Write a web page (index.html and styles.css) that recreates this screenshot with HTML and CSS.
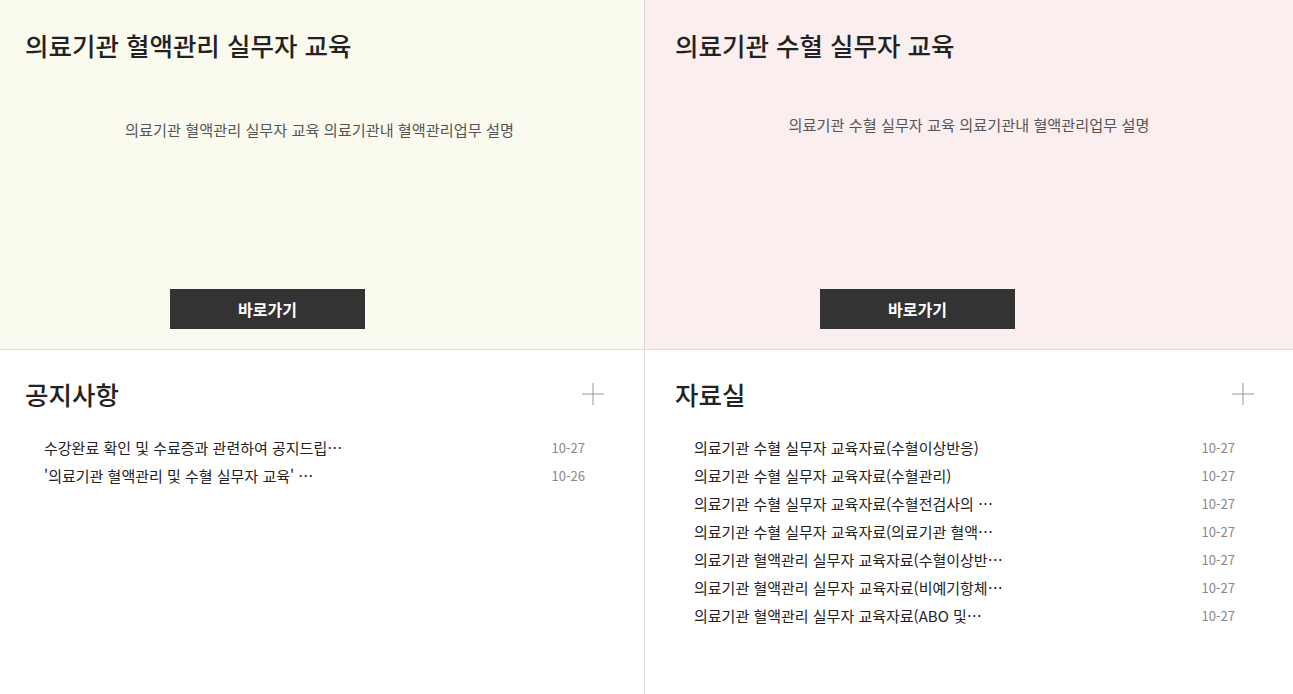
FILE: index.html
```html
<!DOCTYPE html>
<html lang="ko">
<head>
    <meta charset="UTF-8">
    <meta name="viewport" content="width=device-width, initial-scale=1.0">
    <title>혈액관리 실무자 교육</title>
    <link rel="stylesheet" href="styles.css">
</head>
<body>
    <div class="main">
        <!-- 교육 바로가기 -->
        <section class="edu edu-blood">
            <h2 class="edu-title">의료기관 혈액관리 실무자 교육</h2>
            <p class="edu-desc edu-desc-low">의료기관 혈액관리 실무자 교육 의료기관내 혈액관리업무 설명</p>
            <a href="#" class="button">바로가기</a>
        </section>
        <section class="edu edu-trans">
            <h2 class="edu-title">의료기관 수혈 실무자 교육</h2>
            <p class="edu-desc">의료기관 수혈 실무자 교육 의료기관내 혈액관리업무 설명</p>
            <a href="#" class="button">바로가기</a>
        </section>

        <!-- 공지사항 -->
        <section class="board board-left">
            <div class="board-head">
                <h3>공지사항</h3>
                <a href="#" class="more" aria-label="더보기">
                    <svg width="22" height="22" viewBox="0 0 22 22"><path d="M11 0V22M0 11H22" stroke="#999" stroke-width="1" fill="none"/></svg>
                </a>
            </div>
            <ul class="board-list">
                <li><a href="#">수강완료 확인 및 수료증과 관련하여 공지드립…</a><span class="date">10-27</span></li>
                <li><a href="#">'의료기관 혈액관리 및 수혈 실무자 교육' …</a><span class="date">10-26</span></li>
            </ul>
        </section>

        <!-- 자료실 -->
        <section class="board">
            <div class="board-head">
                <h3>자료실</h3>
                <a href="#" class="more" aria-label="더보기">
                    <svg width="22" height="22" viewBox="0 0 22 22"><path d="M11 0V22M0 11H22" stroke="#999" stroke-width="1" fill="none"/></svg>
                </a>
            </div>
            <ul class="board-list">
                <li><a href="#">의료기관 수혈 실무자 교육자료(수혈이상반응)</a><span class="date">10-27</span></li>
                <li><a href="#">의료기관 수혈 실무자 교육자료(수혈관리)</a><span class="date">10-27</span></li>
                <li><a href="#">의료기관 수혈 실무자 교육자료(수혈전검사의 …</a><span class="date">10-27</span></li>
                <li><a href="#">의료기관 수혈 실무자 교육자료(의료기관 혈액…</a><span class="date">10-27</span></li>
                <li><a href="#">의료기관 혈액관리 실무자 교육자료(수혈이상반…</a><span class="date">10-27</span></li>
                <li><a href="#">의료기관 혈액관리 실무자 교육자료(비예기항체…</a><span class="date">10-27</span></li>
                <li><a href="#">의료기관 혈액관리 실무자 교육자료(ABO 및…</a><span class="date">10-27</span></li>
            </ul>
        </section>
    </div>
</body>
</html>
```

FILE: styles.css
```css
* {
    box-sizing: border-box;
}
body {
    margin: 0;
    font-family: "Noto Sans CJK KR", "Noto Sans", sans-serif;
    color: #222;
    background-color: #fff;
}
a {
    color: inherit;
    text-decoration: none;
}
.main {
    display: grid;
    grid-template-columns: 645px 1fr;
    grid-template-rows: 350px 344px;
}

/* 교육 바로가기 */
.edu {
    display: flex;
    flex-direction: column;
    padding: 27px 30px 20px;
    border-bottom: 1px solid #ddd;
}
.edu-blood {
    padding-left: 25px;
    background-color: #fafaee;
    border-right: 1px solid #ddd;
}
.edu-trans {
    background-color: #fbeeee;
}
.edu-title {
    margin: 0;
    font-size: 25.5px;
    font-weight: 500;
    line-height: 36px;
    color: #222;
}
.edu-desc {
    margin: 50px 0 0;
    font-size: 15.2px;
    line-height: 22px;
    color: #555;
    text-align: center;
}
.edu-desc-low {
    margin-top: 55px;
}
.button {
    align-self: flex-start;
    margin-top: auto;
    margin-left: 145px;
    width: 195px;
    height: 40px;
    line-height: 40px;
    background-color: #333;
    color: #fff;
    font-size: 16px;
    font-weight: 700;
    text-align: center;
}

/* 게시판 */
.board {
    padding: 26px 39px 0 30px;
}
.board-left {
    padding-left: 25px;
    padding-right: 40px;
    border-right: 1px solid #ddd;
}
.board-head {
    display: flex;
    justify-content: space-between;
    align-items: center;
}
.board-head h3 {
    margin: 0;
    font-size: 25.5px;
    font-weight: 500;
    line-height: 36px;
}
.more svg {
    display: block;
}
.board-list {
    list-style: none;
    margin: 21px 0 0;
    padding: 0 19px;
}
.board-list li {
    display: flex;
    justify-content: space-between;
    align-items: center;
    height: 28px;
}
.board-list li a {
    white-space: nowrap;
    font-size: 15px;
    color: #222;
}
.board-list .date {
    font-size: 13px;
    color: #888;
}
```
